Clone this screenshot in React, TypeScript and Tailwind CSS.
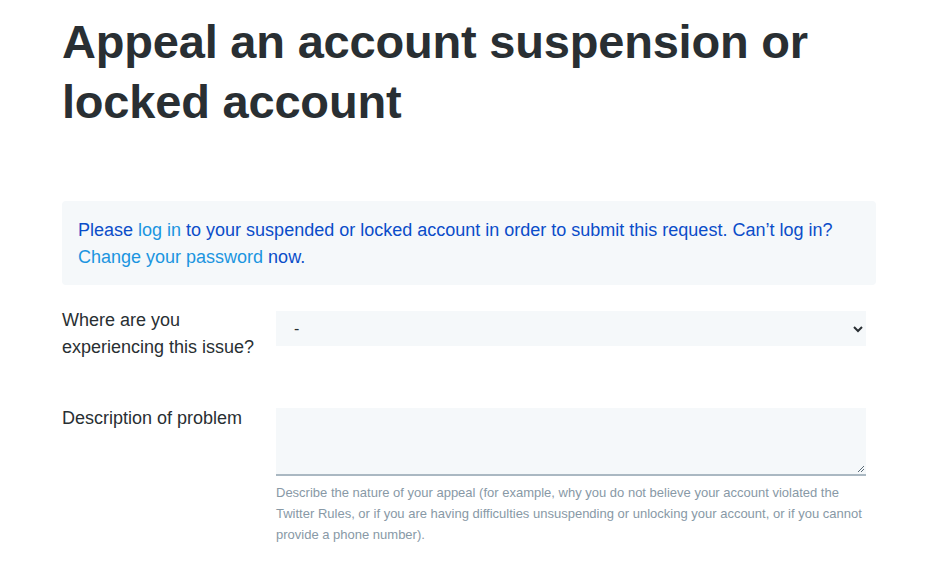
import React from "react";

export default function App() {
  return (
    <div className="min-h-[579px] bg-white" style={{ fontFamily: '"Liberation Sans", Arial, sans-serif' }}>
      <div className="pl-[62px] pr-[58px] pt-[12px]">
        <h1 className="text-[47px] leading-[60px] font-bold text-[#292f33] tracking-[-0.2px]">
          Appeal an account suspension or
          <br />
          locked account
        </h1>
        <div className="mt-[69px] rounded-[4px] bg-[#f5f8fa] px-[16px] pt-[16px] pb-[14px] text-[18px] leading-[27px] text-[#0b4dc9]">
          Please <span className="text-[#1b95e0]">log in</span> to your suspended or locked account in order to submit this request. Can’t log in?{" "}
          <span className="text-[#1b95e0]">Change your password</span> now.
        </div>
        <div className="mt-[26px] flex">
          <div className="w-[214px] shrink-0 text-[18px] leading-[27px] text-[#292f33] pr-[20px] -mt-[4px]">
            Where are you experiencing this issue?
          </div>
          <div className="w-[590px]">
            <div className="flex h-[35px] items-center justify-between bg-[#f5f8fa] pl-[18px] pr-[3px] text-[16px] text-[#292f33]">
              <span>-</span>
              <svg width="10" height="8" viewBox="0 0 10 8">
                <path d="M1 2 L5 6 L9 2" fill="none" stroke="#292f33" strokeWidth="2" />
              </svg>
            </div>
          </div>
        </div>
        <div className="mt-[47px] flex">
          <div className="w-[214px] shrink-0 text-[18px] leading-[27px] text-[#292f33] pr-[20px] -mt-[3px]">
            Description of problem
          </div>
          <div className="w-[590px]">
            <div className="relative h-[68px] bg-[#f5f8fa] border-b-2 border-[#aab8c2]">
              <svg className="absolute right-[1px] bottom-[1px]" width="8" height="8" viewBox="0 0 8 8">
                <path d="M7 1 L1 7 M7 4 L4 7" stroke="#5b6b77" strokeWidth="1" />
              </svg>
            </div>
            <p className="mt-[6px] text-[13px] leading-[21px] text-[#8899a6]">
              Describe the nature of your appeal (for example, why you do not believe your account violated the Twitter Rules, or if you are having difficulties unsuspending or unlocking your account, or if you cannot provide a phone number).
            </p>
          </div>
        </div>
      </div>
    </div>
  );
}
